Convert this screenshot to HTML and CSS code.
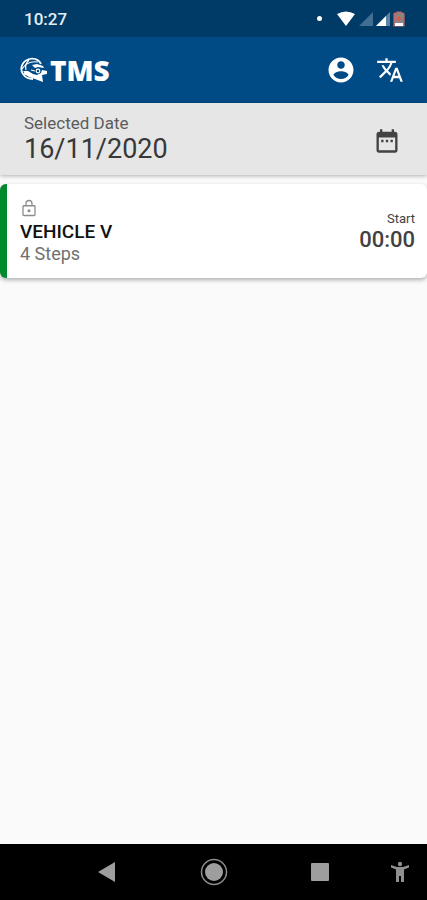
FILE: index.html
```html
<!DOCTYPE html>
<html lang="en">
<head>
    <meta charset="UTF-8">
    <meta name="viewport" content="width=device-width, initial-scale=1.0">
    <title>TMS</title>
    <link rel="stylesheet" href="styles.css">
</head>
<body>
    <div class="status-bar">
        <span class="clock">10:27</span>
        <div class="status-icons">
            <span class="dot"></span>
            <svg width="20" height="16" viewBox="0 0 20 16"><path d="M1 3Q10-2 19 3L10 15z" fill="#fff"/></svg>
            <svg width="14" height="14" viewBox="0 0 14 14"><path d="M14 0v14H0z" fill="#426f91"/></svg>
            <svg width="14" height="14" viewBox="0 0 14 14"><path d="M14 0v14H0z" fill="#5c84a3"/><path d="M10 4v10H0z" fill="#fff"/></svg>
            <svg width="12" height="16" viewBox="0 0 12 16">
                <path d="M4 1h4v1h2q1 0 1 1v12H1V3q0-1 1-1h2z" fill="#8d8286" stroke="#c9665a" stroke-width="1.2"/>
                <path d="M2 12h8v3H2z" fill="#fff"/>
                <path d="M6 5v5M3.5 7.5h5" stroke="#e8563f" stroke-width="1.6"/>
            </svg>
        </div>
    </div>

    <header class="app-bar">
        <div class="logo">
            <svg width="28" height="28" viewBox="0 0 28 28">
                <g fill="none" stroke="#fff">
                    <path d="M21 8C19 3 12 1 7 4C1 7 0 14 3 18C5 21 8 23 13 23" stroke-width="1.8"/>
                    <path d="M2 13C5 8 11 5 18 6" stroke-width="1.2"/>
                    <path d="M9 4C6 7 5 11 6 14" stroke-width="1.2"/>
                    <path d="M4 17C8 19 10 21 15 21" stroke-width="2"/>
                </g>
                <path d="M12 9L17 8L23 10L24 12L18 11L15 12z" fill="#fff"/>
                <path d="M3 15L8 15L13 18L17 19L21 17L22 14L27 15L27 18L22 19L23 26L15 23L9 21z" fill="#fff"/>
                <circle cx="18" cy="15" r="1.8" fill="none" stroke="#fff" stroke-width="1.2"/>
                <path d="M11 14L15 15" stroke="#fff" stroke-width="1.2"/>
            </svg>
            <span class="logo-text">TMS</span>
        </div>
        <div class="app-actions">
            <button class="icon-button" aria-label="Account">
                <svg width="30" height="30" viewBox="0 0 24 24"><path fill="#fff" d="M12 2C6.480 2 2 6.480 2 12s4.480 10 10 10 10-4.480 10-10S17.520 2 12 2zm0 3c1.660 0 3 1.340 3 3s-1.340 3-3 3-3-1.340-3-3 1.340-3 3-3zm0 14.200c-2.500 0-4.710-1.280-6-3.220.030-1.990 4-3.080 6-3.080 1.990 0 5.970 1.090 6 3.080-1.290 1.940-3.500 3.220-6 3.220z"/></svg>
            </button>
            <button class="icon-button" aria-label="Language">
                <svg width="28" height="28" viewBox="0 0 24 24"><path fill="#fff" d="M12.870 15.070l-2.540-2.510.030-.030c1.740-1.940 2.980-4.170 3.710-6.530H17V4h-7V2H8v2H1v1.990h11.170C11.500 7.920 10.440 9.750 9 11.350 8.070 10.320 7.300 9.190 6.690 8h-2c.730 1.630 1.730 3.170 2.980 4.560l-5.090 5.020L4 19l5-5 3.110 3.110.760-2.040zM18.500 10h-2L12 22h2l1.120-3h4.750L21 22h2l-4.500-12zm-2.620 7l1.620-4.330L19.120 17h-3.240z"/></svg>
            </button>
        </div>
    </header>

    <div class="date-bar">
        <div class="date-field">
            <label for="selectedDate">Selected Date</label>
            <input type="text" id="selectedDate" value="16/11/2020" readonly>
        </div>
        <button class="icon-button" aria-label="Open calendar">
            <svg width="28" height="28" viewBox="0 0 24 24"><path fill="#424242" d="M9 11H7v2h2v-2zm4 0h-2v2h2v-2zm4 0h-2v2h2v-2zm2-7h-1V2h-2v2H8V2H6v2H5c-1.110 0-1.990.900-1.990 2L3 20c0 1.100.890 2 2 2h14c1.100 0 2-.900 2-2V6c0-1.100-.900-2-2-2zm0 16H5V9h14v11z"/></svg>
        </button>
    </div>

    <main>
        <a class="card" href="#">
            <div class="card-info">
                <!-- lock with closed shackle -->
                <svg width="18" height="18" viewBox="0 0 24 24">
                    <g fill="none" stroke="#8c8c8c" stroke-width="1.7">
                        <rect x="4" y="9" width="16" height="13" rx="1"/>
                        <path d="M8 9V6a4 4 0 0 1 8 0v3"/>
                    </g>
                    <circle cx="12" cy="15.500" r="2" fill="#8c8c8c"/>
                </svg>
                <span class="vehicle">VEHICLE V</span>
                <span class="steps">4 Steps</span>
            </div>
            <div class="card-time">
                <span class="start">Start</span>
                <span class="time">00:00</span>
            </div>
        </a>
    </main>

    <nav class="nav-bar">
        <button class="nav-back" aria-label="Back">
            <svg width="20" height="20" viewBox="0 0 20 20"><path d="M18 0v20L1 10z" fill="#9e9e9e"/></svg>
        </button>
        <button aria-label="Home">
            <svg width="28" height="28" viewBox="0 0 28 28"><circle cx="14" cy="14" r="12.5" fill="none" stroke="#8c8c8c" stroke-width="1.5"/><circle cx="14" cy="14" r="9" fill="#9e9e9e"/></svg>
        </button>
        <button aria-label="Recent apps">
            <svg width="20" height="20" viewBox="0 0 20 20"><rect x="1" y="1" width="18" height="18" rx="1" fill="#9e9e9e"/></svg>
        </button>
        <button aria-label="Accessibility">
            <svg width="20" height="22" viewBox="0 0 20 22"><circle cx="10" cy="3" r="2.200" fill="#8f8f8f"/><path d="M1 4L7 6h6l6-2v2.500l-5 2V21h-3v-6H9v6H6V8.500l-5-2z" fill="#8f8f8f"/></svg>
        </button>
    </nav>
</body>
</html>
```

FILE: styles.css
```css
* {
    box-sizing: border-box;
}

body {
    font-family: Roboto, sans-serif;
    margin: 0;
    background: #fafafa;
    color: #424242;
    display: flex;
    flex-direction: column;
    min-height: 100vh;
}

svg {
    display: block;
}

button {
    background: none;
    border: none;
    padding: 0;
    cursor: pointer;
}

.status-bar {
    display: flex;
    justify-content: space-between;
    align-items: center;
    height: 37px;
    padding: 0 22px 0 24px;
    background: #003a66;
    color: #e4edf5;
}

.clock {
    font-size: 17px;
    font-weight: 500;
}

.status-icons {
    display: flex;
    align-items: center;
    gap: 3px;
}

.dot {
    width: 5px;
    height: 5px;
    margin-right: 11px;
    border-radius: 50%;
    background: #fff;
}

.app-bar {
    display: flex;
    justify-content: space-between;
    align-items: center;
    height: 66px;
    padding: 0 23px 0 20px;
    background: #004a86;
}

.logo {
    display: flex;
    align-items: center;
    gap: 2px;
}

.logo-text {
    font-family: "Open Sans", sans-serif;
    font-size: 28px;
    line-height: 32px;
    font-weight: 800;
    color: #fff;
}

.app-actions {
    display: flex;
    align-items: center;
    gap: 20px;
}

.date-bar {
    display: flex;
    justify-content: space-between;
    align-items: center;
    height: 72px;
    padding: 4px 26px 0 24px;
    background: #e6e6e6;
    box-shadow: 0 1px 4px rgba(0, 0, 0, 0.3);
}

.date-field {
    display: flex;
    flex-direction: column;
    flex: 1;
    padding-bottom: 4px;
}

.date-field label {
    font-size: 17px;
    line-height: 20px;
    color: #5c5c5c;
}

.date-field input {
    width: 100%;
    height: 32px;
    padding: 0;
    border: none;
    outline: none;
    background: none;
    font-family: inherit;
    font-size: 27px;
    line-height: 32px;
    color: #383838;
}

main {
    flex: 1;
    padding-top: 9px;
}

.card {
    display: flex;
    justify-content: space-between;
    align-items: flex-start;
    padding: 15px 12px 13px 13px;
    border-left: 7px solid #008a2c;
    border-radius: 6px;
    background: #fff;
    box-shadow: 0 2px 4px rgba(0, 0, 0, 0.3);
    color: inherit;
    text-decoration: none;
}

.card-info, .card-time {
    display: flex;
    flex-direction: column;
}

.card-time {
    align-items: flex-end;
    padding-top: 10px;
}

.vehicle {
    margin-top: 4px;
    font-size: 19px;
    line-height: 22px;
    font-weight: 500;
    color: #111;
}

.steps {
    font-size: 18px;
    line-height: 22px;
    color: #707070;
}

.start {
    font-size: 13px;
    line-height: 20px;
}

.time {
    font-size: 22px;
    line-height: 22px;
    font-weight: 500;
}

.nav-bar {
    display: grid;
    grid-template-columns: 1fr 2fr 2fr 2fr 1fr;
    height: 56px;
    background: #000;
}

.nav-bar button {
    display: flex;
    justify-content: center;
    align-items: center;
}

.nav-bar .nav-back {
    grid-column: 2;
}
```
